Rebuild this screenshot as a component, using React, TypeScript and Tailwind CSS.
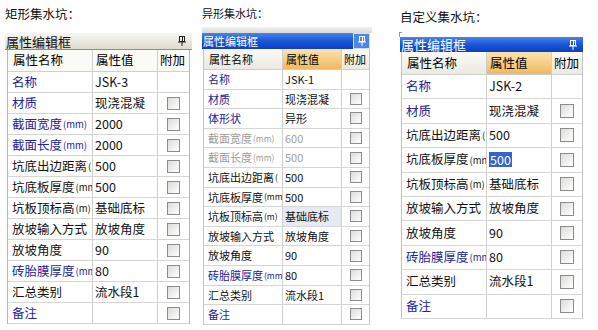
import React from 'react';

type Tone = 'blue' | 'black' | 'gray';

interface Row {
  label: string;
  unit?: string;
  value: string;
  tone: Tone;
  check?: boolean;
  valueBg?: boolean;
  selected?: boolean;
}

interface PanelProps {
  rows: Row[];
  theme: 'classic' | 'blue';
  cols: [number, number, number];
  headH: number;
  rowH: number;
  size: 'sm' | 'md';
  barClass: string;
  tableClass: string;
  boxClass: string;
}

const toneClass: Record<Tone, string> = {
  blue: 'text-[#22229a]',
  black: 'text-[#111111]',
  gray: 'text-[#9c9c9c]',
};

const rowsRect: Row[] = [
  { label: '名称', value: 'JSK-3', tone: 'blue' },
  { label: '材质', value: '现浇混凝', tone: 'blue', check: true },
  { label: '截面宽度', unit: '(mm)', value: '2000', tone: 'blue', check: true },
  { label: '截面长度', unit: '(mm)', value: '2000', tone: 'blue', check: true },
  { label: '坑底出边距离', unit: '(', value: '500', tone: 'black', check: true },
  { label: '坑底板厚度', unit: '(mm', value: '500', tone: 'black', check: true },
  { label: '坑板顶标高', unit: '(m)', value: '基础底标', tone: 'black', check: true },
  { label: '放坡输入方式', value: '放坡角度', tone: 'black', check: true },
  { label: '放坡角度', value: '90', tone: 'black', check: true },
  { label: '砖胎膜厚度', unit: '(mm', value: '80', tone: 'blue', check: true },
  { label: '汇总类别', value: '流水段1', tone: 'black', check: true },
  { label: '备注', value: '', tone: 'blue', check: true },
];

const rowsOdd: Row[] = [
  { label: '名称', value: 'JSK-1', tone: 'blue' },
  { label: '材质', value: '现浇混凝', tone: 'blue', check: true },
  { label: '体形状', value: '异形', tone: 'blue', check: true },
  { label: '截面宽度', unit: '(mm)', value: '600', tone: 'gray', check: true },
  { label: '截面长度', unit: '(mm)', value: '500', tone: 'gray', check: true },
  { label: '坑底出边距离', unit: '(', value: '500', tone: 'black', check: true },
  { label: '坑底板厚度', unit: '(mm', value: '500', tone: 'black', check: true },
  { label: '坑板顶标高', unit: '(m)', value: '基础底标', tone: 'black', check: true, valueBg: true },
  { label: '放坡输入方式', value: '放坡角度', tone: 'black', check: true },
  { label: '放坡角度', value: '90', tone: 'black', check: true },
  { label: '砖胎膜厚度', unit: '(mm', value: '80', tone: 'blue', check: true },
  { label: '汇总类别', value: '流水段1', tone: 'black', check: true },
  { label: '备注', value: '', tone: 'blue', check: true },
];

const rowsCustom: Row[] = [
  { label: '名称', value: 'JSK-2', tone: 'blue' },
  { label: '材质', value: '现浇混凝', tone: 'blue', check: true },
  { label: '坑底出边距离', unit: '(', value: '500', tone: 'black', check: true },
  { label: '坑底板厚度', unit: '(mm', value: '500', tone: 'black', check: true, selected: true },
  { label: '坑板顶标高', unit: '(m)', value: '基础底标', tone: 'black', check: true },
  { label: '放坡输入方式', value: '放坡角度', tone: 'black', check: true },
  { label: '放坡角度', value: '90', tone: 'black', check: true },
  { label: '砖胎膜厚度', unit: '(mm', value: '80', tone: 'blue', check: true },
  { label: '汇总类别', value: '流水段1', tone: 'black', check: true },
  { label: '备注', value: '', tone: 'blue', check: true },
];

function Pin({ light }: { light?: boolean }) {
  const c = light ? '#ffffff' : '#222222';
  return (
    <svg width="8" height="10" viewBox="0 0 8 10">
      <rect x="1.5" y="0.5" width="5" height="5" fill="none" stroke={c} />
      <rect x="4" y="1" width="1" height="4" fill={c} />
      <line x1="0" y1="6" x2="8" y2="6" stroke={c} />
      <line x1="4" y1="6" x2="4" y2="10" stroke={c} />
    </svg>
  );
}

function Checkbox({ boxClass }: { boxClass: string }) {
  return (
    <div className={`border border-[#8c8c8c] bg-gradient-to-br from-[#dcdcd8] to-[#ffffff] ${boxClass}`} />
  );
}

function Panel({ rows, theme, cols, headH, rowH, size, barClass, tableClass, boxClass }: PanelProps) {
  const text = size === 'sm' ? 'text-[11px]' : 'text-[12.5px]';
  const unitText = size === 'sm' ? 'text-[8.5px]' : 'text-[9.5px]';
  const isBlue = theme === 'blue';
  const headCell = isBlue ? 'bg-gradient-to-b from-[#fbfaf6] to-[#ebe9e0]' : 'bg-[#fafaf7]';

  return (
    <div className="flex flex-col">
      <div
        className={`flex items-center justify-between ${barClass} ${
          isBlue
            ? 'bg-gradient-to-b from-[#4a84e8] via-[#1a55d6] to-[#0c40c4] text-white'
            : 'bg-gradient-to-b from-[#f7f6f1] to-[#dedbd0] border-b border-[#8f8d86] text-[#111]'
        }`}
      >
        <span className="pl-[1px] leading-none">属性编辑框</span>
        {isBlue && size === 'sm' ? (
          <div className="flex h-full w-[17px] items-center justify-center border border-[#cfe0ff] bg-[#4f86e6]">
            <Pin light />
          </div>
        ) : (
          <div className="pr-[6px] flex items-center">
            <Pin light={isBlue} />
          </div>
        )}
      </div>
      <div className={`flex flex-col border-l border-r ${tableClass}`}>
        <div className={`flex border-b border-[#cfcfcf] ${text}`} style={{ height: headH }}>
          <div className={`flex items-center pl-[5px] border-r border-[#cfcfcf] ${headCell}`} style={{ width: cols[0] }}>
            属性名称
          </div>
          <div
            className={`flex items-center pl-[3px] border-r border-[#cfcfcf] ${
              isBlue ? 'bg-gradient-to-b from-[#fbe3ac] to-[#f1b85e]' : 'bg-[#fafaf7]'
            }`}
            style={{ width: cols[1] }}
          >
            属性值
          </div>
          <div className={`flex flex-1 items-center pl-[2px] ${headCell}`}>附加</div>
        </div>
        {rows.map((r, i) => (
          <div key={i} className={`flex border-b border-[#d6d6d6] bg-white ${text}`} style={{ height: rowH }}>
            <div
              className={`flex items-center overflow-hidden whitespace-nowrap pl-[4px] border-r border-[#cfcfcf] ${toneClass[r.tone]}`}
              style={{ width: cols[0] }}
            >
              {r.label}
              {r.unit && <span className={`${unitText} ml-[1px]`}>{r.unit}</span>}
            </div>
            <div
              className={`flex items-center overflow-hidden whitespace-nowrap pl-[2px] border-r border-[#cfcfcf] ${
                r.tone === 'gray' ? 'text-[#a0a0a0]' : 'text-[#111111]'
              } ${r.valueBg ? 'bg-[#e7eaf5]' : ''}`}
              style={{ width: cols[1] }}
            >
              {r.selected ? (
                <span className="bg-[#3366cc] px-[1px] leading-[15px] text-white">{r.value}</span>
              ) : (
                r.value
              )}
            </div>
            <div className="flex flex-1 items-center justify-center">
              {r.check && <Checkbox boxClass={boxClass} />}
            </div>
          </div>
        ))}
      </div>
    </div>
  );
}

export default function App() {
  return (
    <div className="flex w-[598px] h-[330px] overflow-hidden bg-white font-[family-name:'Noto_Sans_CJK_SC','Liberation_Sans',sans-serif]">
      {/* 矩形 */}
      <div className="flex w-[195px] flex-col pl-[5px]">
        <div className="h-[33px] pt-[6px] text-[12.5px] leading-[16px] text-[#111]">矩形集水坑：</div>
        <div className="w-[187px]">
          <Panel
            rows={rowsRect}
            theme="classic"
            cols={[85, 65, 33]}
            headH={22}
            rowH={21}
            size="md"
            barClass="h-[17px] text-[13px]"
            tableClass="ml-[2px] mr-[2px] border-[#b8b8b8]"
            boxClass="w-[13px] h-[13px]"
          />
        </div>
      </div>

      {/* 异形 */}
      <div className="flex w-[200px] flex-col pl-[7px]">
        <div className="h-[27px] pt-[6px] text-[11px] leading-[14px] text-[#111]">异形集水坑：</div>
        <div className="w-[170px] h-[6px] bg-gradient-to-b from-[#f2f2f0] to-[#d9d9d6]" />
        <div className="w-[168px]">
          <Panel
            rows={rowsOdd}
            theme="blue"
            cols={[79, 59, 29]}
            headH={21}
            rowH={19.6}
            size="sm"
            barClass="h-[16px] text-[11px]"
            tableClass="ml-[1px] border-[#c4c4c4]"
            boxClass="w-[12px] h-[12px]"
          />
        </div>
      </div>

      {/* 自定义 */}
      <div className="flex w-[203px] flex-col pl-[5px]">
        <div className="h-[33px] pt-[9px] text-[12.5px] leading-[16px] text-[#111]">自定义集水坑：</div>
        <div className="h-[5px] w-[3px] border-l border-t border-[#9a9a9a] -mt-[1px] ml-[-1px]" />
        <div className="w-[183px]">
          <Panel
            rows={rowsCustom}
            theme="blue"
            cols={[85, 65, 31]}
            headH={23}
            rowH={24.4}
            size="md"
            barClass="h-[15px] text-[13px]"
            tableClass="ml-[1px] border-[#c4c4c4]"
            boxClass="w-[14px] h-[14px]"
          />
        </div>
      </div>
    </div>
  );
}
